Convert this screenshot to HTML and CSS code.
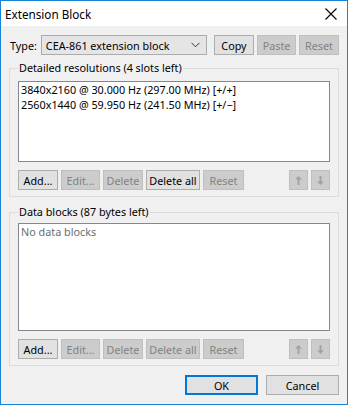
FILE: index.html
```html
<!DOCTYPE html>
<html>
<head>
<meta charset="utf-8">
<link rel="stylesheet" href="styles.css">
</head>
<body>
<div class="window">
  <div class="titlebar">
    <span class="title">Extension Block</span>
    <svg class="close" width="12" height="12" viewBox="0 0 12 12"><path d="M0.5 0.5 L11.5 11.5 M11.5 0.5 L0.5 11.5" stroke="#000" stroke-width="1.1" fill="none"/></svg>
  </div>
  <div class="content">
    <div class="type-row">
      <span class="label">Type:</span>
      <div class="combo">
        <span>CEA-861 extension block</span>
        <svg width="9" height="6" viewBox="0 0 9 6"><path d="M0.5 0.8 L4.5 4.8 L8.5 0.8" stroke="#333" stroke-width="1" fill="none"/></svg>
      </div>
      <div class="btns">
        <button class="btn w-copy">Copy</button>
        <button class="btn dis w-paste">Paste</button>
        <button class="btn dis w-reset">Reset</button>
      </div>
    </div>

    <fieldset class="group g1">
      <legend>Detailed resolutions (4 slots left)</legend>
      <div class="list l1">
        <div class="item">3840x2160 @ 30.000 Hz (297.00 MHz) [+/+]</div>
        <div class="item">2560x1440 @ 59.950 Hz (241.50 MHz) [+/−]</div>
      </div>
      <div class="row">
        <button class="btn w-add">Add...</button>
        <button class="btn dis w-edit">Edit...</button>
        <button class="btn dis w-del">Delete</button>
        <button class="btn w-delall">Delete all</button>
        <button class="btn dis w-reset2">Reset</button>
        <span class="spacer"></span>
        <button class="btn dis arrow"><svg width="7" height="9" viewBox="0 0 7 9"><path d="M3.5 0 L7 3.5 L4.5 3.5 L4.5 9 L2.5 9 L2.5 3.5 L0 3.5 Z" fill="#a3a3a3"/></svg></button>
        <button class="btn dis arrow"><svg width="7" height="9" viewBox="0 0 7 9"><path d="M3.5 9 L7 5.5 L4.5 5.5 L4.5 0 L2.5 0 L2.5 5.5 L0 5.5 Z" fill="#a3a3a3"/></svg></button>
      </div>
    </fieldset>

    <fieldset class="group g2">
      <legend>Data blocks (87 bytes left)</legend>
      <div class="list l2">
        <div class="item muted">No data blocks</div>
      </div>
      <div class="row">
        <button class="btn w-add">Add...</button>
        <button class="btn dis w-edit">Edit...</button>
        <button class="btn dis w-del">Delete</button>
        <button class="btn dis w-delall">Delete all</button>
        <button class="btn dis w-reset2">Reset</button>
        <span class="spacer"></span>
        <button class="btn dis arrow"><svg width="7" height="9" viewBox="0 0 7 9"><path d="M3.5 0 L7 3.5 L4.5 3.5 L4.5 9 L2.5 9 L2.5 3.5 L0 3.5 Z" fill="#a3a3a3"/></svg></button>
        <button class="btn dis arrow"><svg width="7" height="9" viewBox="0 0 7 9"><path d="M3.5 9 L7 5.5 L4.5 5.5 L4.5 0 L2.5 0 L2.5 5.5 L0 5.5 Z" fill="#a3a3a3"/></svg></button>
      </div>
    </fieldset>

    <div class="footer">
      <button class="btn default w-ok">OK</button>
      <button class="btn w-cancel">Cancel</button>
    </div>
  </div>
</div>
</body>
</html>
```
FILE: styles.css
```css
* { box-sizing: border-box; }
html, body { margin: 0; padding: 0; }
body {
  font-family: "Noto Sans", "Liberation Sans", sans-serif;
  font-size: 10.8px;
  color: #000;
  background: #f0f0f0;
}
.window {
  width: 348px;
  height: 405px;
  border: 1px solid #1883d7;
  background: #f0f0f0;
  display: flex;
  flex-direction: column;
}
.titlebar {
  height: 25px;
  background: #fff;
  display: flex;
  align-items: center;
  justify-content: space-between;
  padding: 0 10px 0 4px;
  font-size: 11.7px;
}
.close { display: block; }
.content {
  padding: 0 8px;
  display: flex;
  flex-direction: column;
}
.type-row {
  display: flex;
  align-items: center;
  margin-top: 9px;
  height: 20px;
}
.label { width: 32px; padding-left: 1px; }
.combo {
  width: 167px;
  height: 20px;
  border: 1px solid #acacac;
  background: #e5e5e5;
  display: flex;
  align-items: center;
  justify-content: space-between;
  padding: 0 6px 0 4px;
}
.btns { display: flex; gap: 3px; margin-left: 7px; }
.btn {
  font: inherit;
  height: 20px;
  border: 1px solid #adadad;
  background: #e1e1e1;
  color: #000;
  padding: 0;
  display: flex;
  align-items: center;
  justify-content: center;
  margin: 0;
  white-space: nowrap;
}
.btn.dis {
  background: #cccccc;
  border-color: #bfbfbf;
  color: #838383;
}
.w-copy { width: 40px; }
.w-paste { width: 39px; }
.w-reset { width: 40px; }
.w-add { width: 40px; }
.w-edit { width: 39px; }
.w-del { width: 40px; }
.w-delall { width: 54px; }
.w-reset2 { width: 41px; }
.arrow { width: 19px; }
.group {
  border: 1px solid #dcdcdc;
  margin: 0;
  padding: 5px 8px 6px 8px;
  min-width: 0;
}
.g1 { margin-top: 5px; }
.g2 { margin-top: 7px; padding-top: 3px; }
legend {
  padding: 0 1px;
  height: 16px;
  line-height: 16px;
}
.list {
  background: #fff;
  border: 1px solid #828790;
  padding: 0 2px;
}
.l1 { height: 81px; }
.l2 { height: 108px; }
.item { line-height: 15px; white-space: nowrap; }
.muted { color: #6d6d6d; }
.row {
  display: flex;
  gap: 3px;
  margin-top: 8px;
}
.spacer { flex: 1; }
.footer {
  display: flex;
  justify-content: flex-end;
  gap: 8px;
  margin-top: 9px;
}
.w-ok { width: 73px; }
.w-cancel { width: 73px; }
.btn.default { border: 2px solid #0078d7; }
```
